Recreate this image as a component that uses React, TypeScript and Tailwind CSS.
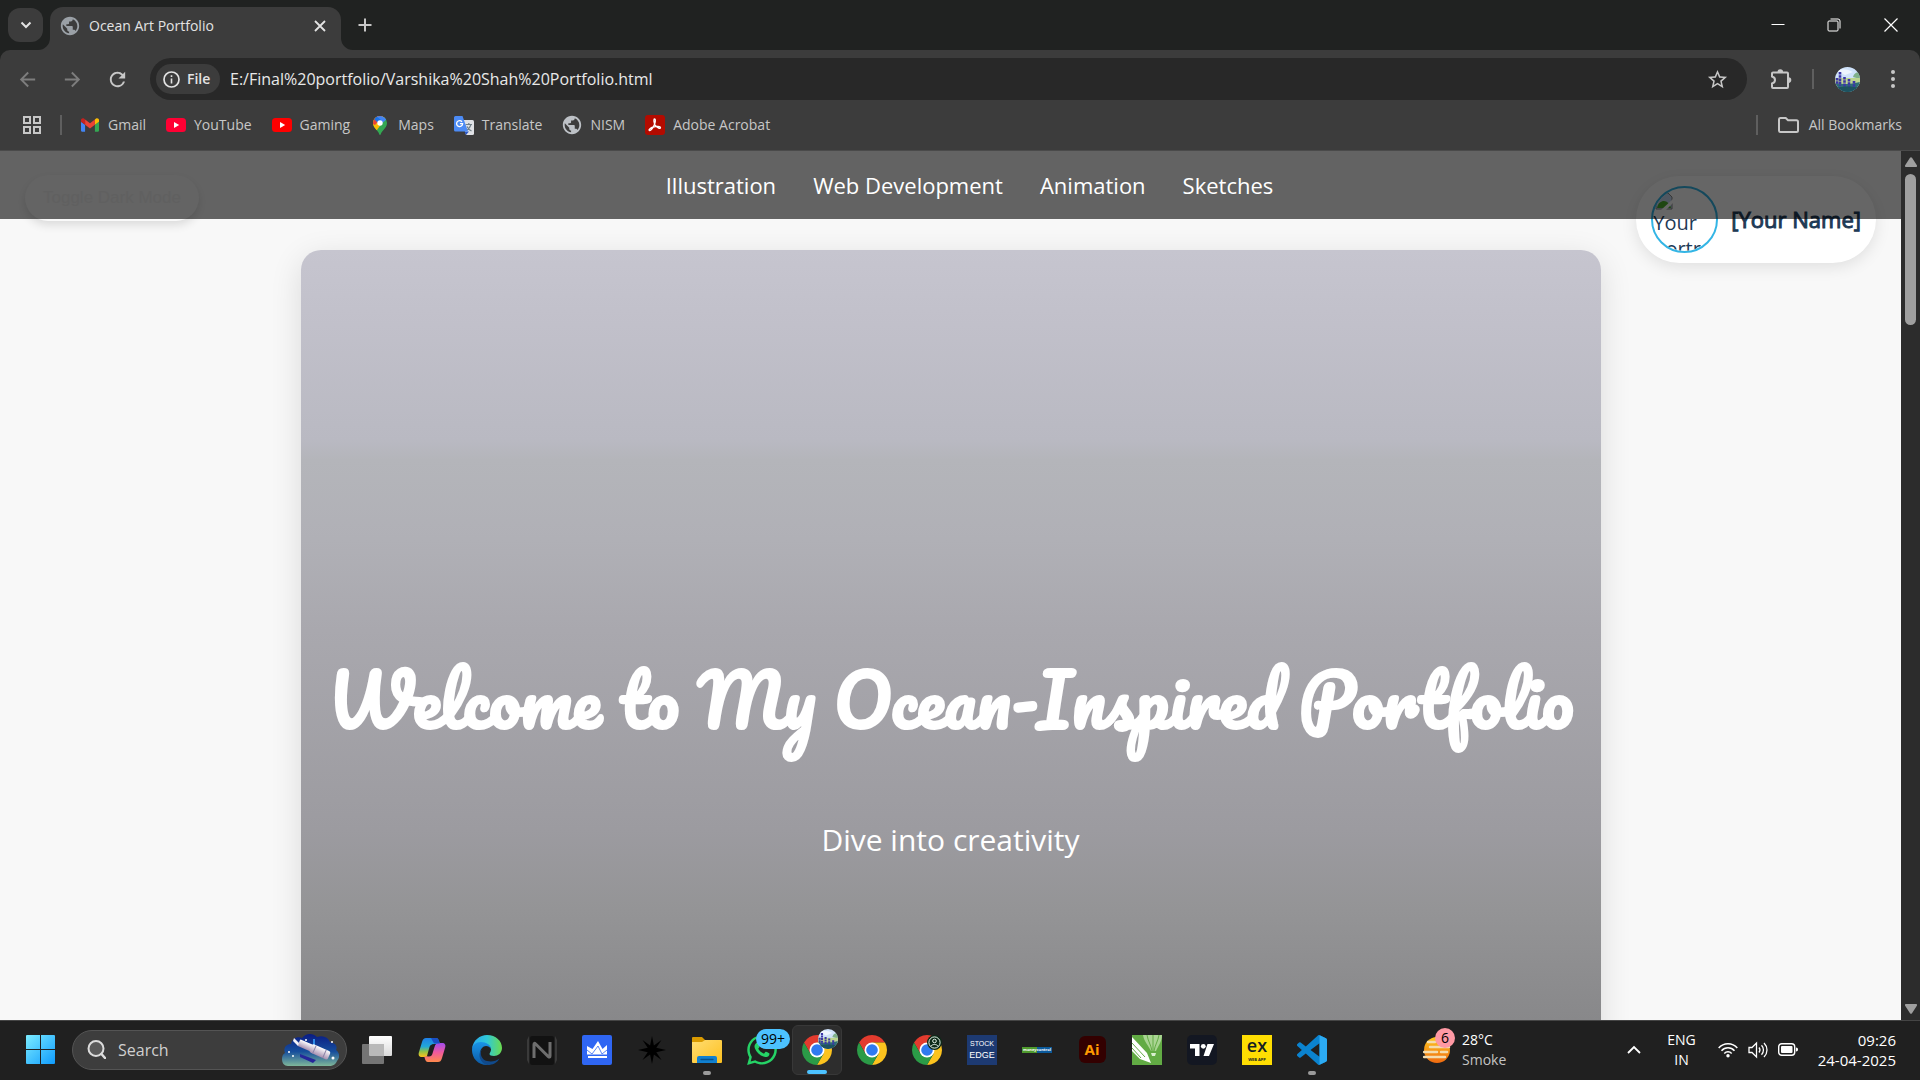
import type { ReactNode } from "react";
import { FaWhatsapp } from "react-icons/fa";
import {
  MdArrowBack,
  MdArrowForward,
  MdPublic,
  MdRefresh,
  MdStarBorder,
} from "react-icons/md";

const BOOKMARKS: { label: string; icon: ReactNode }[] = [
  { label: "Gmail", icon: <GmailIcon /> },
  { label: "YouTube", icon: <YouTubeIcon color="#ff0033" /> },
  { label: "Gaming", icon: <YouTubeIcon color="#ff0000" /> },
  { label: "Maps", icon: <MapsIcon /> },
  { label: "Translate", icon: <TranslateIcon /> },
  { label: "NISM", icon: <MdPublic className="size-[22px] shrink-0 text-[#bdc1c6]" /> },
  { label: "Adobe Acrobat", icon: <AcrobatIcon /> },
];

const NAV_LINKS = ["Illustration", "Web Development", "Animation", "Sketches"];

const TASKBAR_APPS: {
  name: string;
  icon: ReactNode;
  state?: "open" | "active";
}[] = [
  { name: "Task view", icon: <TaskViewIcon /> },
  { name: "Copilot", icon: <CopilotIcon /> },
  { name: "Edge", icon: <EdgeIcon /> },
  { name: "Notes", icon: <NIcon /> },
  { name: "Crown", icon: <CrownIcon /> },
  { name: "Burst", icon: <BurstIcon /> },
  { name: "File Explorer", icon: <ExplorerIcon />, state: "open" },
  { name: "WhatsApp", icon: <WhatsAppBadge /> },
  { name: "Chrome profile", icon: <ChromeWithAvatar />, state: "active" },
  { name: "Chrome", icon: <ChromeIcon /> },
  { name: "Chrome guest", icon: <ChromeWithPerson /> },
  { name: "Stock Edge", icon: <StockEdgeIcon /> },
  { name: "Moneycontrol", icon: <MoneyControlIcon /> },
  { name: "Illustrator", icon: <IllustratorIcon /> },
  { name: "CorelDRAW", icon: <CorelIcon /> },
  { name: "TradingView", icon: <TradingViewIcon /> },
  { name: "Exness", icon: <ExIcon /> },
  { name: "VS Code", icon: <VsCodeIcon />, state: "open" },
];

export default function App() {
  return (
    <div className="flex h-screen flex-col overflow-hidden bg-[#202221] font-['Open_Sans','Noto_Sans',sans-serif]">
      <TabStrip />
      <div className="rounded-t-[10px] border-b border-[#4a4a4a] bg-[#3c3c3c]">
        <Toolbar />
        <BookmarksBar />
      </div>
      <div className="flex min-h-0 flex-1">
        <PortfolioPage />
        <Scrollbar />
      </div>
      <Taskbar />
    </div>
  );
}

function TabStrip() {
  return (
    <header className="flex h-[50px] shrink-0 items-start pl-2 text-[#e3e3e3]">
      <button
        aria-label="Search tabs"
        className="mt-2 flex h-[34px] w-[35px] items-center justify-center rounded-xl bg-[#3c3c3c]"
      >
        <svg className="size-3" viewBox="0 0 12 12" fill="none">
          <path d="M1.500 3.500 6 8l4.500-4.500" stroke="currentColor" strokeWidth="2" />
        </svg>
      </button>
      <div className="relative ml-[7px] mt-[7px] flex h-[44px] w-[291px] items-center rounded-t-[13px] bg-[#3c3c3c] pb-[7px] pl-[9px] pr-[11px]">
        <svg className="absolute -left-3 bottom-px size-3" viewBox="0 0 12 12">
          <path d="M12 0v12H0A12 12 0 0 0 12 0Z" fill="#3c3c3c" />
        </svg>
        <svg className="absolute -right-3 bottom-px size-3" viewBox="0 0 12 12">
          <path d="M0 0v12h12A12 12 0 0 1 0 0Z" fill="#3c3c3c" />
        </svg>
        <MdPublic className="size-[22px] text-[#9aa0a6]" />
        <span className="ml-2 flex-1 text-sm">Ocean Art Portfolio</span>
        <button aria-label="Close tab" className="flex size-5 items-center justify-center">
          <svg className="size-3" viewBox="0 0 12 12">
            <path d="m1 1 10 10M11 1 1 11" stroke="currentColor" strokeWidth="1.800" />
          </svg>
        </button>
      </div>
      <button aria-label="New tab" className="ml-[14px] mt-[15px] flex size-5 items-center justify-center">
        <svg className="size-[14px]" viewBox="0 0 14 14">
          <path d="M7 .5v13M.5 7h13" stroke="#c7c7c7" strokeWidth="2" />
        </svg>
      </button>
      <div className="ml-auto flex h-[49px] text-white">
        <button aria-label="Minimize" className="flex w-14 items-center justify-center">
          <svg className="size-[14px]" viewBox="0 0 14 14">
            <path d="M.5 6.500h13" stroke="currentColor" />
          </svg>
        </button>
        <button aria-label="Restore" className="flex w-14 items-center justify-center">
          <svg className="size-[14px]" viewBox="0 0 14 14" fill="none" stroke="currentColor">
            <rect x="1" y="3" width="10" height="10" rx="1" />
            <path d="M3.500 1H11a2 2 0 0 1 2 2v7.500" />
          </svg>
        </button>
        <button aria-label="Close" className="flex w-[58px] items-center justify-center">
          <svg className="size-[14px]" viewBox="0 0 14 14">
            <path d="m.5.5 13 13m0-13-13 13" stroke="currentColor" strokeWidth="1.200" />
          </svg>
        </button>
      </div>
    </header>
  );
}

function Toolbar() {
  return (
    <div className="flex h-[58px] items-center pl-4 pr-[18px] text-[#c7c7c7]">
      <button aria-label="Back" className="text-[#7d7d7d]">
        <MdArrowBack className="size-[23px]" />
      </button>
      <button aria-label="Forward" className="ml-[22px] text-[#7d7d7d]">
        <MdArrowForward className="size-[23px]" />
      </button>
      <button aria-label="Reload" className="ml-[22px]">
        <MdRefresh className="size-[23px]" />
      </button>
      <div className="ml-[21px] flex h-[42px] flex-1 items-center rounded-full bg-[#282828] pl-[6px] pr-[18px]">
        <button className="flex h-[30px] w-16 shrink-0 items-center gap-[7px] rounded-full bg-[#3c3c3c] pl-[7px] text-sm font-semibold text-[#e3e3e3]">
          <svg className="size-[17px]" viewBox="0 0 17 17" fill="none" stroke="currentColor">
            <circle cx="8.500" cy="8.500" r="7.500" strokeWidth="1.700" />
            <path d="M8.500 7.500v5M8.500 4.300v1.700" strokeWidth="1.600" />
          </svg>
          File
        </button>
        <input
          aria-label="Address"
          className="ml-[10px] min-w-0 flex-1 bg-transparent text-base text-[#e8e8e8] outline-none"
          defaultValue="E:/Final%20portfolio/Varshika%20Shah%20Portfolio.html"
        />
        <button aria-label="Bookmark this page">
          <MdStarBorder className="size-[23px]" />
        </button>
      </div>
      <button aria-label="Extensions" className="ml-[23px]">
        <svg className="size-[22px]" viewBox="0 0 22 22">
          <path
            d="M3 4.500h14a1 1 0 0 1 1 1V19a1 1 0 0 1-1 1H3a1 1 0 0 1-1-1v-3.500c2-.5 3-1.800 3-3.500S4 9 2 8.500v-3a1 1 0 0 1 1-1Z"
            fill="none"
            stroke="currentColor"
            strokeWidth="2"
          />
          <path d="M7.500 4a2.800 2.800 0 0 1 5.600 0ZM18.500 9.300a2.800 2.800 0 0 1 0 5.600Z" fill="currentColor" />
        </svg>
      </button>
      <span className="ml-5 h-5 w-[2px] bg-[#5f5f5f]" />
      <button aria-label="Profile" className="ml-[21px]">
        <Avatar className="size-[25px]" />
      </button>
      <button aria-label="Menu" className="ml-[23px] flex w-[19px] justify-center">
        <svg className="h-[18px] w-1" viewBox="0 0 4 18" fill="currentColor">
          <circle cx="2" cy="2" r="2" />
          <circle cx="2" cy="9" r="2" />
          <circle cx="2" cy="16" r="2" />
        </svg>
      </button>
    </div>
  );
}

function BookmarksBar() {
  return (
    <nav className="flex h-[42px] items-start pl-[22px] pr-[18px] pt-[7px] text-sm text-[#c7c7c7]">
      <button aria-label="Apps" className="flex size-5 items-center justify-center">
        <svg className="size-[18px]" viewBox="0 0 18 18" fill="none" stroke="currentColor" strokeWidth="2">
          <path d="M1 1h6v6H1ZM11 1h6v6h-6ZM1 11h6v6H1ZM11 11h6v6h-6Z" />
        </svg>
      </button>
      <span className="ml-[18px] h-5 w-[2px] bg-[#5f5f5f]" />
      <ul className="ml-[18px] flex gap-5">
        {BOOKMARKS.map(({ label, icon }) => (
          <li key={label}>
            <a href="#" className="flex items-center gap-2">
              <span className="flex size-5 items-center justify-center">{icon}</span>
              {label}
            </a>
          </li>
        ))}
      </ul>
      <span className="ml-auto h-5 w-[2px] bg-[#5f5f5f]" />
      <a href="#" className="ml-5 flex items-center gap-[10px]">
        <svg className="h-4 w-[21px]" viewBox="0 0 21 16" fill="none">
          <path
            d="M2.500 1h5.200l2.300 2.300h8.500a1.500 1.500 0 0 1 1.500 1.500v8.700a1.500 1.500 0 0 1-1.500 1.500h-16A1.500 1.500 0 0 1 1 13.500v-11A1.500 1.500 0 0 1 2.500 1Z"
            stroke="currentColor"
            strokeWidth="2"
          />
        </svg>
        All Bookmarks
      </a>
    </nav>
  );
}

function PortfolioPage() {
  return (
    <div className="relative min-w-0 flex-1 overflow-hidden bg-[#f8f8f8]">
      <button className="absolute left-[25px] top-6 h-[46px] rounded-full bg-[#f9f9f9] px-[18px] font-['Liberation_Sans',sans-serif] text-[17px] text-[#f0f0f0] shadow-[0_4px_10px_rgba(0,0,0,0.12)]">
        Toggle Dark Mode
      </button>
      <div className="absolute right-[25px] top-[25px] flex h-[87px] items-center gap-[13px] rounded-full bg-white px-[15px] text-[#1e3a56] shadow-[0_4px_16px_rgba(0,0,0,0.1)]">
        <div
          role="img"
          aria-label="Your Portrait"
          className="size-[67px] overflow-hidden rounded-full border-2 border-[#33b5e5] text-xl leading-[26px]"
        >
          <svg className="ml-[2px] mt-1 size-[18px]" viewBox="0 0 18 18">
            <path d="M1 1h12l4 4v12H1Z" fill="#c7d9f3" stroke="#888" />
            <path d="M2 16c1-5 4-7 7-7s6 3 7 7Z" fill="#4caf2f" />
            <path d="m6 18 12-11v4l-7 7Z" fill="#fff" />
          </svg>
          Your Portrait
        </div>
        <span className="text-[22px] [-webkit-text-stroke:1px]">[Your Name]</span>
      </div>
      <nav className="relative flex h-[68px] justify-center bg-black/60 pl-[38px]">
        <ul className="flex items-center gap-[37px] text-[22px] font-medium text-white">
          {NAV_LINKS.map((link) => (
            <li key={link}>
              <a href="#">{link}</a>
            </li>
          ))}
        </ul>
      </nav>
      <main className="mx-auto mt-[31px] flex h-[1100px] w-[1300px] flex-col items-center rounded-[20px] bg-[linear-gradient(#c6c5cf_0,#c2c1cb_60px,#b9b9c2_190px,#b4b5ba_210px,#b0b0b6_290px,#a9a8ae_380px,#9c9ba0_580px,#949496_660px,#88888a_770px)] pt-[405px] text-center text-white shadow-[0_8px_32px_rgba(0,0,0,0.12)]">
        <h1 className="whitespace-nowrap font-[Pacifico,cursive] text-[70px] font-bold leading-[90px]">
          Welcome to My Ocean-Inspired Portfolio
        </h1>
        <p className="mt-[75px] text-3xl leading-10">Dive into creativity</p>
      </main>
    </div>
  );
}

function Scrollbar() {
  return (
    <div className="flex w-[19px] shrink-0 flex-col items-center bg-[#2c2c2c] py-[6px]">
      <svg className="h-[10px] w-3" viewBox="0 0 12 10">
        <path d="M5 .8a1.300 1.300 0 0 1 2 0L12 8.500a1 1 0 0 1-1 1.500H1a1 1 0 0 1-1-1.500Z" fill="#9f9f9f" />
      </svg>
      <span className="mt-[7px] h-[151px] w-[11px] rounded-full bg-[#9f9f9f]" />
      <svg className="mt-auto h-[10px] w-3 rotate-180" viewBox="0 0 12 10">
        <path d="M5 .8a1.300 1.300 0 0 1 2 0L12 8.500a1 1 0 0 1-1 1.500H1a1 1 0 0 1-1-1.500Z" fill="#9f9f9f" />
      </svg>
    </div>
  );
}

function Taskbar() {
  return (
    <footer className="flex h-[60px] shrink-0 items-center border-t border-[#454545] bg-[#202020] pb-[2px] pr-6 text-sm text-white">
      <button aria-label="Start" className="ml-[15px] flex size-[50px] items-center justify-center">
        <svg className="size-[29px]" viewBox="0 0 29 29">
          <defs>
            <linearGradient id="start" x1="0" y1="0" x2="29" y2="29" gradientUnits="userSpaceOnUse">
              <stop offset="0" stopColor="#7cecff" />
              <stop offset="1" stopColor="#0f9bfd" />
            </linearGradient>
          </defs>
          <path
            d="M1 0h13v14H0V1a1 1 0 0 1 1-1ZM15 0h13a1 1 0 0 1 1 1v13H15ZM0 15h14v14H1a1 1 0 0 1-1-1ZM15 15h14v13a1 1 0 0 1-1 1H15Z"
            fill="url(#start)"
          />
        </svg>
      </button>
      <label className="ml-[7px] flex h-10 w-[275px] items-center rounded-full border border-[#545454] bg-[#3d3d3d] pl-[14px] pr-[7px]">
        <svg className="size-[19px] shrink-0" viewBox="0 0 19 19" fill="none" stroke="#dcdcdc" strokeLinecap="round">
          <circle cx="9" cy="8.500" r="7.500" strokeWidth="2" fill="#5a5a5a" />
          <path d="m14.500 14 3.500 4" strokeWidth="2.500" />
        </svg>
        <input
          aria-label="Search"
          placeholder="Search"
          className="ml-3 min-w-0 flex-1 bg-transparent text-base outline-none placeholder:text-[#d0d0d0]"
        />
        <TelescopeArt />
      </label>
      <div className="ml-[5px] flex gap-[5px]">
        {TASKBAR_APPS.map(({ name, icon, state }) => (
          <TaskbarButton key={name} name={name} state={state}>
            {icon}
          </TaskbarButton>
        ))}
      </div>
      <button className="ml-[86px] flex items-center gap-[11px] text-left leading-5">
        <span className="relative">
          <SmokeIcon />
          <span className="absolute -right-1 -top-[9px] flex size-5 items-center justify-center rounded-full bg-[#ff99a4] text-black">
            6
          </span>
        </span>
        <span>
          <span className="block">28°C</span>
          <span className="block text-[#c4c4c4]">Smoke</span>
        </span>
      </button>
      <div className="ml-auto flex items-center leading-5">
        <button aria-label="Show hidden icons">
          <svg className="h-[9px] w-[14px]" viewBox="0 0 14 9" fill="none">
            <path d="m1 8 6-6 6 6" stroke="currentColor" strokeWidth="1.800" />
          </svg>
        </button>
        <button className="ml-[26px] text-center">
          ENG
          <br />
          IN
        </button>
        <button aria-label="Network, volume, battery" className="ml-[22px] flex items-center gap-[10px]">
          <WifiIcon />
          <SpeakerIcon />
          <BatteryIcon />
        </button>
        <button className="ml-5 text-right text-[15px]">
          09:26
          <br />
          24-04-2025
        </button>
      </div>
    </footer>
  );
}

function TaskbarButton({
  name,
  state,
  children,
}: {
  name: string;
  state?: "open" | "active";
  children: ReactNode;
}) {
  return (
    <button
      aria-label={name}
      className={
        state === "active"
          ? "relative flex size-[50px] items-center justify-center rounded-md border border-[#383838] bg-[#2d2d2d]"
          : "relative flex size-[50px] items-center justify-center"
      }
    >
      {children}
      {state === "open" && (
        <span className="absolute bottom-0 h-1 w-2 rounded-full bg-[#9a9a9a]" />
      )}
      {state === "active" && (
        <span className="absolute bottom-0 h-1 w-5 rounded-full bg-[#4cc2ff]" />
      )}
    </button>
  );
}

function GmailIcon() {
  return (
    <svg className="h-[14px] w-[18px]" viewBox="52 42 88 66">
      <path fill="#4285f4" d="M58 108h14V74L52 59v43c0 3.320 2.690 6 6 6" />
      <path fill="#34a853" d="M120 108h14c3.320 0 6-2.690 6-6V59l-20 15" />
      <path fill="#fbbc04" d="M120 48v26l20-15v-8c0-7.420-8.470-11.650-14.400-7.200" />
      <path fill="#ea4335" d="M72 74V48l24 18 24-18v26L96 92" />
      <path fill="#c5221f" d="M52 51v8l20 15V48l-5.600-4.200c-5.940-4.450-14.400-.22-14.400 7.200" />
    </svg>
  );
}

function YouTubeIcon({ color }: { color: string }) {
  return (
    <svg className="h-[14px] w-5" viewBox="0 0 20 14">
      <rect width="20" height="14" rx="3.500" fill={color} />
      <path d="M8 4v6l5.200-3Z" fill="#fff" />
    </svg>
  );
}

function MapsIcon() {
  return (
    <svg className="h-[19px] w-[14px]" viewBox="0 0 14 19">
      <defs>
        <clipPath id="pin">
          <path d="M7 0a7 7 0 0 1 7 7c0 3-1.600 4.700-3.300 6.800C9.200 15.600 8.200 16.500 7.600 18.500c-.2.700-1 .7-1.200 0-.6-2-1.600-2.900-3.100-4.700C1.600 11.700 0 10 0 7a7 7 0 0 1 7-7Z" />
        </clipPath>
      </defs>
      <g clipPath="url(#pin)">
        <path d="M0 0h14v19H0Z" fill="#34a853" />
        <path d="M0 0h14L4 14 0 15Z" fill="#fbbc04" />
        <path d="M0 0h10L2 9 0 8Z" fill="#ea4335" />
        <path d="M3 0h11v3L7 9 4 5Z" fill="#4285f4" />
        <path d="M3 0 1 3l4 4 3-3Z" fill="#1a73e8" />
        <circle cx="7" cy="7" r="2.700" fill="#fff" />
      </g>
    </svg>
  );
}

function TranslateIcon() {
  return (
    <svg className="h-[19px] w-5" viewBox="0 0 20 19">
      <path d="M8 4h10.500A1.500 1.500 0 0 1 20 5.500v12a1.500 1.500 0 0 1-1.500 1.500H12Z" fill="#dfe1e5" />
      <path d="M11.500 8.500h6.500M14.800 7v1.500M17 8.500c-.8 2.800-2.500 4.800-4.500 6m.5-4c1 2 2.500 3.500 4.500 4.500" stroke="#6f7e86" strokeWidth="1.200" fill="none" />
      <path d="m10.500 15.500 1.500 3.500 3-3.500Z" fill="#2a56c6" />
      <path d="M1.500 0h7L14 15.500H1.500A1.500 1.500 0 0 1 0 14V1.500A1.500 1.500 0 0 1 1.500 0Z" fill="#4c8bf5" />
      <path d="M8 5.800a3 3 0 1 0 .6 1.900H5.900" stroke="#fff" strokeWidth="1.300" fill="none" />
    </svg>
  );
}

function AcrobatIcon() {
  return (
    <svg className="size-5" viewBox="0 0 20 20">
      <rect width="20" height="20" rx="3" fill="#b30b00" />
      <path
        d="M9.500 4c1.300 0 1 3-.2 5.800C8 12.800 5.800 15.700 4.500 15.500c-1.600-.4.800-2.700 4-3.500 3-.8 7-.8 7 .7 0 1.400-3.300.3-5-2C9 8.600 8.300 4 9.500 4Z"
        fill="none"
        stroke="#fff"
        strokeWidth="1.300"
      />
    </svg>
  );
}

function Avatar({ className }: { className: string }) {
  return (
    <svg className={className} viewBox="0 0 25 25">
      <defs>
        <clipPath id="avatar">
          <circle cx="12.500" cy="12.500" r="12.500" />
        </clipPath>
      </defs>
      <g clipPath="url(#avatar)">
        <rect width="25" height="25" fill="#cfe2fa" />
        <path d="M2 4c5-3 11-2 16 1l-8 3Z" fill="#eef5ff" />
        <path d="M18 10c1-4 4-5 7-5v7Z" fill="#7fb08a" />
        <rect y="11" width="25" height="7" fill="#bcd58f" />
        <path d="M0 16c8 2 17 1 25-1v10H0Z" fill="#2e6f74" />
        <path d="M5 5v14M9.500 10v11M14 12v9M19 14v7M2 11v6" stroke="#3c35a8" strokeWidth="2.600" strokeDasharray="2.500 .7" />
        <path d="M0 21c8-2 17-2 25 0v4H0Z" fill="#1d5260" />
      </g>
    </svg>
  );
}

function TelescopeArt() {
  return (
    <svg className="h-8 w-[57px] shrink-0" viewBox="0 0 57 32">
      <defs>
        <linearGradient id="sky" x1="0" y1="0" x2="0" y2="1">
          <stop offset="0" stopColor="#0a1c84" />
          <stop offset=".55" stopColor="#174f9c" />
          <stop offset="1" stopColor="#7fb79a" />
        </linearGradient>
        <linearGradient id="tube" x1="0" y1="0" x2="0" y2="1">
          <stop offset="0" stopColor="#fff" />
          <stop offset="1" stopColor="#a58fb0" />
        </linearGradient>
      </defs>
      <path
        d="M6 32c-4 0-6-3-6-7 0-3 1-5 3-6-2-5 1-9 6-9 1-5 6-8 11-6 4-5 11-5 15-1 6-2 11 0 13 5 5 1 8 4 6 8 4 3 4 8 1 11-1 3-4 5-8 5Z"
        fill="url(#sky)"
      />
      <path d="m18 20 16 6-3 3-13-6Z" fill="#26269a" />
      <path d="M32 5v11M29 12l8 3" stroke="#2f8be8" strokeWidth="2" />
      <g transform="rotate(24 30 16)">
        <rect x="15" y="11" width="14" height="7" rx="1" fill="url(#tube)" />
        <rect x="28" y="10" width="20" height="9" rx="2" fill="url(#tube)" />
        <path d="M32 10v9M43 10v9" stroke="#8c84a8" />
      </g>
      <path d="m12 4 5 5-1 3-5-5Z" fill="#f4f1f7" />
      <g fill="#fff">
        <circle cx="51" cy="24" r="1.500" />
        <circle cx="11" cy="22" r="1" />
        <circle cx="7" cy="18" r="1" />
        <circle cx="24" cy="6" r="1" />
        <circle cx="50" cy="8" r="1" />
      </g>
    </svg>
  );
}

function TaskViewIcon() {
  return (
    <svg className="size-[30px]" viewBox="0 0 30 30">
      <defs>
        <linearGradient id="pane" x1="0" y1="0" x2="0" y2="1">
          <stop offset="0" stopColor="#fff" />
          <stop offset="1" stopColor="#dadada" />
        </linearGradient>
      </defs>
      <rect x="7" y="1" width="23" height="20" rx="1" fill="url(#pane)" />
      <rect y="9" width="22" height="20" rx="1" fill="#757575" />
      <path d="M7 9h15v12H8a1 1 0 0 1-1-1Z" fill="#b9b9b9" />
    </svg>
  );
}

function CopilotIcon() {
  return (
    <svg className="size-[30px]" viewBox="0 0 30 30">
      <defs>
        <linearGradient id="cop-a" x1="0" y1="0" x2="0" y2="1">
          <stop offset="0" stopColor="#1f7fe8" />
          <stop offset=".45" stopColor="#22a8d8" />
          <stop offset=".7" stopColor="#8bc34a" />
          <stop offset="1" stopColor="#ffc21a" />
        </linearGradient>
        <linearGradient id="cop-b" x1="0" y1="0" x2="0" y2="1">
          <stop offset="0" stopColor="#a24cf0" />
          <stop offset=".5" stopColor="#f05a9c" />
          <stop offset="1" stopColor="#ff8a4c" />
        </linearGradient>
      </defs>
      <path d="M9 3h10c2 0 2.500 1.500 3 3l1 3h-6c-2 0-2.500 1-3 3l-2 6c-.8 3-1.500 4-4 4H5c-3 0-4-2-3-5l3-10c1-3 2-4 4-4Z" fill="url(#cop-a)" />
      <path d="M21 27H11c-2 0-2.500-1.500-3-3l-.7-2.500H12c2 0 3-1 3.500-3l2-6.500c1-3 2-4 4-4H25c3 0 4 2 3 5l-3 10c-1 3-2 4-4 4Z" fill="url(#cop-b)" />
      <path d="M14 3h5c2 0 2.500 1.500 3 3l.8 2.500H17Z" fill="#1a4fc4" />
      <path d="m12.500 12-2.500 9h3l3.500-11.500c-2 0-3.500.5-4 2.500Z" fill="#202020" />
    </svg>
  );
}

function EdgeIcon() {
  return (
    <svg className="size-[30px]" viewBox="0 0 30 30">
      <defs>
        <linearGradient id="edge-a" x1="0" y1=".3" x2="1" y2=".3">
          <stop offset="0" stopColor="#2aa7ee" />
          <stop offset=".5" stopColor="#2fc8d8" />
          <stop offset="1" stopColor="#6bdc4e" />
        </linearGradient>
        <linearGradient id="edge-b" x1="0" y1="0" x2="0" y2="1">
          <stop offset="0" stopColor="#1994e8" />
          <stop offset="1" stopColor="#0c59a4" />
        </linearGradient>
      </defs>
      <path d="M0 14C1 5 8 0 15 0c9 0 15 6 15 13 0 5-4 8-8 8-3 0-4.500-1-4.500-2s1.500-2 1.500-4.500C19 11 15 8 10 8 5 8 1 11 0 14Z" fill="url(#edge-a)" />
      <path d="M0 15c0-5 4-8 9-8s10 3 10 7c-1-2-3-3-5-3-3 0-6 3-6 8 0 6 4 10 9 10.800C7 31 0 24 0 15Z" fill="url(#edge-b)" />
      <path d="M10 14c-3 5 0 11 5 12 5 1.200 9 0 12.500-2.500C25 28 20.500 30 16 30 10 29 6 23 8 17Z" fill="#114a8b" />
    </svg>
  );
}

function NIcon() {
  return (
    <svg className="size-[30px]" viewBox="0 0 30 30">
      <path d="M2 1 0 5v20l2 4ZM28 1l2 4v20l-2 4Z" fill="#3a3a3a" />
      <rect x="3" y="1" width="24" height="29" rx="2" fill="#121212" />
      <path d="M7 23V9.500q0-2 1.700-.5l12.600 12.500q1.700 1.300 1.700-.5V7" fill="none" stroke="#6e6e6e" strokeWidth="3" />
    </svg>
  );
}

function CrownIcon() {
  return (
    <svg className="size-[30px]" viewBox="0 0 30 30">
      <rect width="30" height="30" rx="2" fill="#2f66f3" />
      <path d="m5 11 5.500 3L16 6l4.500 8 4.500-4v9.500H5Z" fill="#fff" />
      <path d="m5 15 5 4 6-8 4 8 5-4" fill="none" stroke="#2f66f3" strokeWidth=".8" />
      <path d="M6 21h19v2H6Z" fill="#fff" />
    </svg>
  );
}

function BurstIcon() {
  return (
    <svg className="size-[30px]" viewBox="0 0 30 30" fill="#000">
      <path d="m15 1 1.900 9.500L24.500 5l-5.200 7.800L29 15l-9.700 2.200 5.200 7.800-7.600-5.500L15 29l-1.900-9.500L5.500 25l5.200-7.800L1 15l9.700-2.200L5.500 5l7.600 5.500Z" />
    </svg>
  );
}

function ExplorerIcon() {
  return (
    <svg className="size-[30px]" viewBox="0 0 30 30">
      <defs>
        <linearGradient id="folder" x1="0" y1="0" x2="1" y2="1">
          <stop offset="0" stopColor="#ffdd72" />
          <stop offset="1" stopColor="#fdc01f" />
        </linearGradient>
      </defs>
      <path d="M0 3a1 1 0 0 1 1-1h9l3 3v5H0Z" fill="#d99a00" />
      <path d="M0 7h10l3-2h16a1 1 0 0 1 1 1v21a1 1 0 0 1-1 1H1a1 1 0 0 1-1-1Z" fill="url(#folder)" />
      <path d="M5 28v-5a2 2 0 0 1 2-2h16a2 2 0 0 1 2 2v5Z" fill="#1180d0" />
      <path d="M9 24.500h12" stroke="#07518c" strokeWidth="1.300" strokeLinecap="round" />
    </svg>
  );
}

function WhatsAppBadge() {
  return (
    <span className="relative">
      <FaWhatsapp className="size-[34px] text-[#25d366]" />
      <span className="absolute -right-[11px] -top-1 flex h-5 w-[34px] items-center justify-center rounded-full bg-[#4cc2ff] text-sm text-black">
        99+
      </span>
    </span>
  );
}

function ChromeIcon() {
  return (
    <svg className="size-[30px]" viewBox="0 0 48 48">
      <path d="M3.220 12A24 24 0 0 1 44.780 12H24L13.610 30Z" fill="#e33b2e" />
      <path d="M44.780 12A24 24 0 0 1 24 48L34.390 30 24 12Z" fill="#fcc31e" />
      <path d="M24 48A24 24 0 0 1 3.220 12L13.610 30H34.390Z" fill="#2b9b47" />
      <circle cx="24" cy="24" r="12" fill="#fff" />
      <circle cx="24" cy="24" r="9.300" fill="#2f7af0" />
    </svg>
  );
}

function ChromeWithAvatar() {
  return (
    <span className="relative">
      <ChromeIcon />
      <Avatar className="absolute -right-[6px] -top-[6px] size-5" />
    </span>
  );
}

function ChromeWithPerson() {
  return (
    <span className="relative">
      <ChromeIcon />
      <svg className="absolute right-0 top-0 size-[15px]" viewBox="0 0 15 15" fill="none" stroke="#e6f4ea">
        <circle cx="7.500" cy="7.500" r="7.500" fill="#0d2a18" stroke="none" />
        <circle cx="7.500" cy="7.500" r="5.600" />
        <circle cx="7.500" cy="6" r="1.800" />
        <path d="M3.800 11.300c1.500-2.400 5.900-2.400 7.400 0" />
      </svg>
    </span>
  );
}

function StockEdgeIcon() {
  return (
    <span className="flex size-[30px] flex-col items-center justify-center bg-[#1d3a72] font-['Liberation_Sans_Narrow','Liberation_Sans',sans-serif] text-white">
      <span className="text-[7px] leading-[10px]">STOCK</span>
      <span className="text-[9px] leading-3">EDGE</span>
    </span>
  );
}

function MoneyControlIcon() {
  return (
    <span className="flex h-[6px] w-[30px] items-center justify-center bg-linear-to-r from-[#4f9a2e] from-50% to-[#0b5a9c] to-50% text-[4px] leading-[6px] font-bold text-white">
      moneycontrol
    </span>
  );
}

function IllustratorIcon() {
  return (
    <span className="flex size-[27px] items-center justify-center rounded-md bg-[#330000] text-[15px] font-bold text-[#ff9a00]">
      Ai
    </span>
  );
}

function CorelIcon() {
  return (
    <svg className="size-[30px]" viewBox="0 0 30 30">
      <rect width="30" height="30" fill="#62ab44" />
      <path d="M11 0h19c0 7-4 11-6 16h-5C17 11 12 7 11 0Z" fill="#a9d492" />
      <path d="M15 0c1 6 4 10 5 16M21 0v16M27 0c-1 6-4 10-5 16" stroke="#62ab44" fill="none" />
      <path d="M19 18h5l-1 3h-3Z" fill="#d9efcf" />
      <path d="M0 2 15 18l4 10-11-4L0 16Z" fill="#fff" />
      <path d="m0 8 13 14M0 13l9 10" stroke="#62ab44" />
    </svg>
  );
}

function TradingViewIcon() {
  return (
    <svg className="size-[30px]" viewBox="0 0 30 30">
      <rect width="30" height="30" rx="5" fill="#131722" />
      <path d="M3 9h9.500v12H8v-7.500H3ZM20.500 9H27l-5 12h-5.500Z" fill="#fff" />
      <circle cx="16.300" cy="11.300" r="2.400" fill="#fff" />
    </svg>
  );
}

function ExIcon() {
  return (
    <span className="flex size-[30px] flex-col items-center bg-[#ffde02] text-[#141d22]">
      <span className="text-lg leading-5 font-semibold">ex</span>
      <span className="mt-[2px] text-[4px] leading-[5px] font-bold whitespace-nowrap">WEB APP</span>
    </span>
  );
}

function VsCodeIcon() {
  return (
    <svg className="size-[30px]" viewBox="0 0 24 24">
      <path
        d="M23.150 2.587L18.210.21a1.494 1.494 0 0 0-1.705.29l-9.460 8.630-4.120-3.128a.999.999 0 0 0-1.276.057L.327 7.261A1 1 0 0 0 .326 8.740L3.899 12 .326 15.260a1 1 0 0 0 .001 1.479L1.650 17.940a.999.999 0 0 0 1.276.057l4.120-3.128 9.460 8.630a1.492 1.492 0 0 0 1.704.29l4.942-2.377A1.500 1.500 0 0 0 24 20.060V3.939a1.500 1.500 0 0 0-.85-1.352zm-5.146 14.861L10.826 12l7.178-5.448v10.896z"
        fill="#0b83cf"
      />
      <path d="M18 .2 23.150 2.587A1.500 1.500 0 0 1 24 3.939V20.060a1.500 1.500 0 0 1-.85 1.352L18 23.800Z" fill="#2cabf3" />
    </svg>
  );
}

function SmokeIcon() {
  return (
    <svg className="h-[26px] w-7" viewBox="0 0 28 26">
      <defs>
        <linearGradient id="sun" x1="0" y1="0" x2="0" y2="1">
          <stop offset="0" stopColor="#ffc81e" />
          <stop offset="1" stopColor="#ef6a10" />
        </linearGradient>
      </defs>
      <circle cx="14" cy="13" r="13" fill="url(#sun)" />
      <path d="M5 5h7M7 10h19M1 15h13M18 15h6M1 20h21" stroke="#f3dcae" strokeWidth="2.500" strokeLinecap="round" />
    </svg>
  );
}

function WifiIcon() {
  return (
    <svg className="h-4 w-5" viewBox="0 0 20 16" fill="none" stroke="currentColor" strokeWidth="1.500">
      <path d="M.7 6C5.500.2 14.500.2 19.300 6M3.500 8.800c3.500-4 9.500-4 13 0M6.300 11.500c2-2.300 5.400-2.300 7.400 0" />
      <circle cx="10" cy="13.800" r="1.700" fill="currentColor" stroke="none" />
    </svg>
  );
}

function SpeakerIcon() {
  return (
    <svg className="h-[18px] w-5" viewBox="0 0 20 18" fill="none" stroke="currentColor" strokeWidth="1.300">
      <path d="M1 6.500h3L8.500 2v14L4 11.500H1Z" />
      <path d="M11 6.500c1.200 1.500 1.200 3.500 0 5M13.500 4.300c2.600 2.700 2.600 6.700 0 9.400M16 2c4 4 4 10 0 14" />
    </svg>
  );
}

function BatteryIcon() {
  return (
    <svg className="h-[13px] w-5" viewBox="0 0 20 13">
      <rect x=".7" y=".7" width="16" height="11.600" rx="3" fill="none" stroke="currentColor" strokeWidth="1.400" />
      <rect x="3" y="3" width="11.500" height="7" rx="1" fill="currentColor" />
      <path d="M18 4.500c1.300 0 2 .8 2 2s-.7 2-2 2Z" fill="currentColor" />
    </svg>
  );
}
